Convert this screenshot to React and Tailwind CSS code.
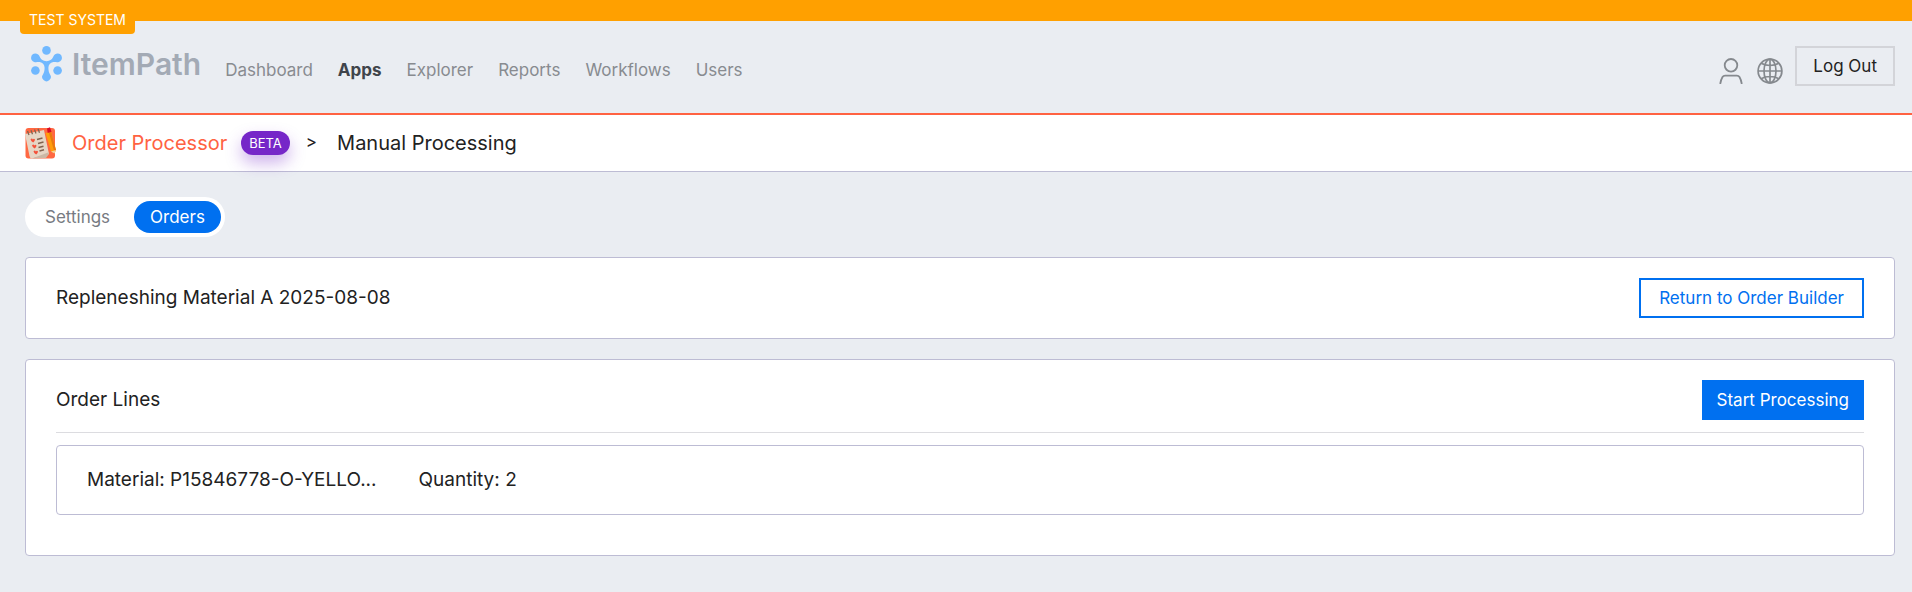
import { useState } from "react";

const NAV = ["Dashboard", "Apps", "Explorer", "Reports", "Workflows", "Users"];
const TABS = ["Settings", "Orders"];
const LINES = [{ id: 1, material: "P15846778-O-YELLO...", quantity: 2 }];

export default function App() {
  const [tab, setTab] = useState("Orders");

  return (
    <div className="min-h-screen bg-[#eaedf2] font-['Inter',sans-serif] text-[17px] leading-6 text-[#222]">
      <div className="h-[21px] bg-[#ffa000] pl-5">
        <span className="inline-block h-[34px] rounded-b bg-[#ffa000] px-[9px] pt-[10px] text-sm leading-5 text-white">TEST SYSTEM</span>
      </div>

      <header className="flex h-[94px] items-start justify-between border-b-2 border-[#ff6242] pt-[25px] pr-[17px] pl-[31px]">
        <div className="flex items-start">
          <a href="#" className="flex items-center gap-[10px]">
            <LogoMark />
            <span className="text-[30px] leading-9 font-semibold text-[#a3aab5]">ItemPath</span>
          </a>
          <nav className="flex gap-[25px] pt-3 pl-6">
            {NAV.map((item) => (
              <a key={item} href="#" className={item === "Apps" ? "font-bold text-[#3f444b]" : "text-[#888b90]"}>{item}</a>
            ))}
          </nav>
        </div>
        <div className="flex items-start">
          <div className="flex gap-[14px] pt-3 pr-3">
            <a href="#" aria-label="Account"><UserIcon /></a>
            <a href="#" aria-label="Language"><GlobeIcon /></a>
          </div>
          <button className="h-10 border-2 border-[#d3d4d9] px-4 pb-px">Log Out</button>
        </div>
      </header>

      {/* Breadcrumb */}
      <div className="flex h-[57px] items-center border-b border-[#bdbcd4] bg-white pl-[25px] text-xl">
        <AppIcon />
        <a href="#" className="ml-4 text-[#ff6242]">Order Processor</a>
        <span className="ml-[14px] flex h-6 items-center rounded-full bg-[#7627c8] px-2 text-[13px] text-white shadow-[0_8px_16px_rgba(118,39,200,0.35)]">BETA</span>
        <span className="ml-4 text-[17px]">&gt;</span>
        <span className="ml-5">Manual Processing</span>
      </div>

      <main className="pt-[25px] pr-[17px] pl-[25px]">
        <div className="flex h-10 w-fit items-center rounded-full bg-white p-1">
          {TABS.map((t) => (
            <button key={t} onClick={() => setTab(t)} className={`h-8 rounded-full px-4 pb-px ${t === tab ? "ml-2 bg-[#0070f0] text-white" : "text-[#777b82]"}`}>{t}</button>
          ))}
        </div>

        <section className="mt-5 flex items-center justify-between rounded border border-[#bdbcd4] bg-white px-[30px] py-5">
          <h1 className="text-[19px]">Repleneshing Material A 2025-08-08</h1>
          <button className="h-10 border-2 border-[#0070f0] px-[18px] pb-px text-[#0070f0]">Return to Order Builder</button>
        </section>

        <section className="mt-5 rounded border border-[#bdbcd4] bg-white px-[30px] pt-5 pb-10">
          <div className="flex items-center justify-between border-b border-[#dcdce0] pb-3">
            <h2 className="text-[19px]">Order Lines</h2>
            <button className="h-10 bg-[#0070f0] px-[15px] pb-px text-white">Start Processing</button>
          </div>
          {LINES.map((line) => (
            <div key={line.id} className="mt-3 flex h-[70px] items-center gap-[42px] rounded border border-[#bdbcd4] px-[30px] text-[19px]">
              <span>Material: {line.material}</span>
              <span>Quantity: {line.quantity}</span>
            </div>
          ))}
        </section>
      </main>
    </div>
  );
}

function LogoMark() {
  return (
    <svg width="31" height="36" viewBox="0 0 31 36" fill="#70b8ff">
      <circle cx="15.5" cy="4.4" r="4.3" />
      <circle cx="4.4" cy="24.5" r="4.3" />
      <circle cx="26.6" cy="24.5" r="4.3" />
      <path d="M8.4 10c1 2.900 3.600 5.200 7.100 5.200s6.100-2.300 7.100-5.200c.7-1.600 2.200-2.500 4-2.500a4.300 4.300 0 0 1 1.300 8.400c-1.900.7-3.700-.1-5.600.2-3.100.5-4.900 2.800-4.900 5.700 0 2.600.4 4.500 1.500 6.500a4.300 4.300 0 1 1-6.800 0c1.100-2 1.500-3.900 1.500-6.500 0-2.900-1.800-5.200-4.900-5.700-1.900-.3-3.700.5-5.600-.2A4.300 4.300 0 0 1 4.400 7.500c1.800 0 3.300.9 4 2.500Z" />
    </svg>
  );
}

function UserIcon() {
  return (
    <svg width="24" height="26" viewBox="0 0 24 26" fill="none" stroke="#85898e" strokeWidth="1.8">
      <circle cx="12" cy="7.300" r="6.300" />
      <path d="M1.200 26c.5-3 1.200-5.200 2.300-7 .6-.9 1.500-1.300 2.600-1.300h11.800c1.100 0 2 .4 2.600 1.300 1.100 1.800 1.800 4 2.300 7" />
    </svg>
  );
}

function GlobeIcon() {
  return (
    <svg width="26" height="26" viewBox="0 0 26 26" fill="none" stroke="#85898e" strokeWidth="1.700">
      <circle cx="13" cy="13" r="11.900" />
      <ellipse cx="13" cy="13" rx="6" ry="11.900" />
      <path d="M13 1v24M1 13h24M4.200 5.200c2.300 1.500 5.400 2.300 8.800 2.300s6.500-.8 8.800-2.300M4.200 20.800c2.300-1.500 5.400-2.300 8.800-2.300s6.500.8 8.800 2.300" />
    </svg>
  );
}

// Notepad with a pencil over an orange tile
function AppIcon() {
  return (
    <svg width="31" height="32" viewBox="0 0 31 32">
      <rect x="0.500" y="1" width="29.500" height="30.500" rx="3" fill="#ff6842" />
      <path d="M0 7 19 3l5 24-17 4.500Q5 31.500 4.500 29Z" fill="#e6d6c5" />
      <path d="m7 31.500 16-6 1 1.500-3 4Z" fill="#cbb8a5" />
      <path d="m2.500 4 1.500 4M6 3.200l1.500 4M9.500 2.500l1.500 4M13 1.800l1.500 4" stroke="#80634f" strokeWidth="1.300" />
      <path d="M5.500 12.500q1.500-1.800 2.300 0 1.200-1.700 2.200 0 0 1.500-1.800 3-2-.9-2.700-3ZM7 18.500q1.500-1.800 2.300 0 1.200-1.700 2.200 0 0 1.500-1.800 3-2-.9-2.700-3ZM8.500 24.500q1.500-1.800 2.300 0 1.200-1.700 2.200 0 0 1.500-1.800 3-2-.9-2.700-3Z" fill="#f4513a" />
      <path d="m12 12.500 5.500-1.500M13 16.500l5.500-1.500M13.500 20.500l5-1.300M14.500 24l4.500-1.200" stroke="#80634f" strokeWidth="1.500" />
      <path d="m20.500 6 5.500-1.500 5 18.500-1.500 3.500-3.500-2Z" fill="#ff9d0a" />
      <path d="m23.800 5.200 2.200-.7 5 18.500-2 .5Z" fill="#e87910" />
      <path d="m26 24.500 5-1.500-1.500 3.500Z" fill="#f4cf9b" />
      <path d="m22 1.500 3-1.300 1.500 4.500-3.800 1.200Z" fill="#d90b25" />
    </svg>
  );
}
